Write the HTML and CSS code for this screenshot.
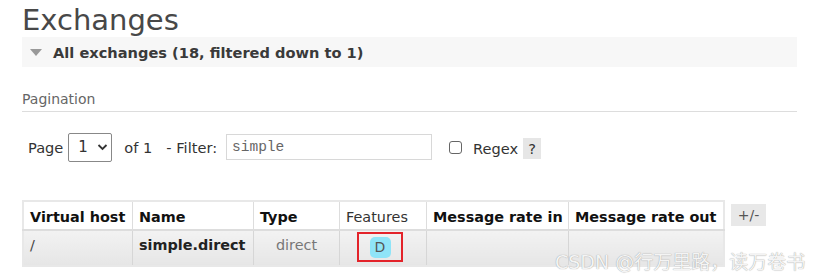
FILE: index.html
```html
<!DOCTYPE html>
<html>
<head>
<meta charset="utf-8">
<link rel="stylesheet" href="styles.css">
</head>
<body>
<div class="page">
  <h1 class="title">Exchanges</h1>
  <div class="section-bar">
    <span class="tri"></span>
    <span class="section-title">All exchanges (18, filtered down to 1)</span>
  </div>
  <div class="pagination-head">Pagination</div>
  <div class="filter-row">
    <span>Page</span>
    <span class="select">1 <svg width="11" height="8" viewBox="0 0 11 8"><path d="M1.5 2 L5.5 6 L9.5 2" fill="none" stroke="#333" stroke-width="1.8"/></svg></span>
    <span class="of">of 1</span>
    <span class="flabel">- Filter:</span>
    <span class="input">simple</span>
    <span class="checkbox"></span>
    <span class="regex">Regex</span>
    <span class="help">?</span>
  </div>
  <div class="table-wrap">
    <table class="list">
      <thead>
        <tr>
          <th class="c-vhost">Virtual host</th>
          <th class="c-name">Name</th>
          <th class="c-type">Type</th>
          <th class="c-feat plain">Features</th>
          <th class="c-in">Message rate in</th>
          <th class="c-out">Message rate out</th>
        </tr>
      </thead>
      <tbody>
        <tr>
          <td>/</td>
          <td class="name">simple.direct</td>
          <td class="type">direct</td>
          <td class="feat"><span class="mark"><span class="badge">D</span></span></td>
          <td></td>
          <td></td>
        </tr>
      </tbody>
    </table>
    <span class="plusminus">+/-</span>
  </div>
  <div class="bottom-line"></div>
</div>
<div class="watermark">CSDN @行万里路，读万卷书</div>
</body>
</html>
```
FILE: styles.css
```css
html, body {
  margin: 0;
  padding: 0;
  background: #fff;
}
body {
  font-family: "DejaVu Sans", Verdana, sans-serif;
  color: #444;
  position: relative;
  width: 820px;
  height: 280px;
  overflow: hidden;
}
.page {
  padding-left: 22px;
  width: 775px;
}
.title {
  margin: 0;
  padding-top: 4px;
  font-size: 29px;
  font-weight: normal;
  line-height: 33px;
  color: #484848;
}
.section-bar {
  height: 30px;
  background: #f7f7f7;
  display: flex;
  align-items: center;
}
.tri {
  width: 0;
  height: 0;
  margin-left: 8px;
  margin-right: 11px;
  border-left: 6px solid transparent;
  border-right: 6px solid transparent;
  border-top: 7px solid #999;
}
.section-title {
  font-weight: bold;
  font-size: 14.6px;
  color: #3a3a3a;
}
.pagination-head {
  margin-top: 24px;
  font-size: 14px;
  color: #666;
  padding-bottom: 4px;
  border-bottom: 1px solid #ddd;
}
.filter-row {
  margin-top: 20px;
  display: flex;
  align-items: center;
  font-family: "DejaVu Sans", sans-serif;
  font-size: 14.6px;
  color: #333;
  padding-left: 6px;
  height: 30px;
}
.select {
  margin-left: 5px;
  width: 44px;
  height: 29px;
  box-sizing: border-box;
  border: 1px solid #888;
  border-radius: 2px;
  display: flex;
  align-items: center;
  padding-left: 9px;
  gap: 9px;
  font-size: 15px;
}
.of {
  margin-left: 12px;
}
.flabel {
  margin-left: 14px;
}
.input {
  margin-left: 9px;
  width: 206px;
  height: 26px;
  box-sizing: border-box;
  border: 1px solid #d8d8d8;
  font-family: "Liberation Mono", monospace;
  font-size: 14.5px;
  color: #666;
  display: flex;
  align-items: center;
  padding-left: 5px;
}
.checkbox {
  margin-left: 17px;
  width: 13px;
  height: 13px;
  box-sizing: border-box;
  border: 1px solid #666;
  border-radius: 3px;
}
.regex {
  margin-left: 11px;
  margin-top: 3px;
}
.help {
  margin-left: 5px;
  margin-top: 3px;
  background: #e6e6e6;
  width: 18px;
  height: 21px;
  display: flex;
  align-items: center;
  justify-content: center;
  color: #333;
}
.table-wrap {
  margin-top: 38px;
  display: flex;
  align-items: flex-start;
}
.list {
  border-collapse: collapse;
  table-layout: fixed;
  border: 2px solid #e8e8e8;
  font-size: 14.4px;
}
.list th {
  text-align: left;
  font-weight: bold;
  color: #111;
  height: 25px;
  padding: 2px 0 0 6px;
  border-right: 1px solid #ddd;
  border-bottom: 2px solid #ddd;
  background: #fff;
  white-space: nowrap;
  overflow: hidden;
}
.list th.plain {
  font-weight: normal;
  color: #333;
}
.list td {
  height: 28px;
  padding: 0 0 6px 6px;
  background: linear-gradient(#f2f2f2, #e6e6e6);
  border-right: 1px solid #d6d6d6;
  vertical-align: middle;
  color: #444;
  white-space: nowrap;
}
.c-vhost { width: 102px; }
.c-name { width: 114px; }
.c-type { width: 79px; }
.c-feat { width: 80px; }
.c-in { width: 135px; }
.c-out { width: 148px; }
.list td.name {
  font-weight: bold;
  color: #222;
}
.list td.type {
  text-align: center;
  color: #777;
  padding-left: 0;
}
.list td.feat {
  padding: 0;
  text-align: left;
  vertical-align: top;
}
.mark {
  display: flex;
  align-items: center;
  justify-content: center;
  margin-left: 17px;
  margin-top: 1px;
  width: 46px;
  height: 30px;
  box-sizing: border-box;
  border: 2px solid #e3232a;
}
.badge {
  display: inline-flex;
  align-items: center;
  justify-content: center;
  width: 21px;
  height: 21px;
  border-radius: 5px;
  background: #8fe4f8;
  color: #555;
  font-size: 14px;
}
.plusminus {
  margin-left: 6px;
  margin-top: 4px;
  width: 35px;
  height: 22px;
  background: #e8e8e8;
  display: flex;
  align-items: center;
  justify-content: center;
  font-size: 14px;
  color: #555;
}
.bottom-line {
  margin-top: 15px;
  height: 2px;
  background: #f0f0f0;
}
.watermark {
  position: absolute;
  left: 555px;
  top: 247px;
  font-family: "DejaVu Sans", "Noto Sans CJK SC", sans-serif;
  font-size: 19px;
  color: #f4f4f4;
  text-shadow: 0 0 1px #888;
  white-space: nowrap;
}
```
